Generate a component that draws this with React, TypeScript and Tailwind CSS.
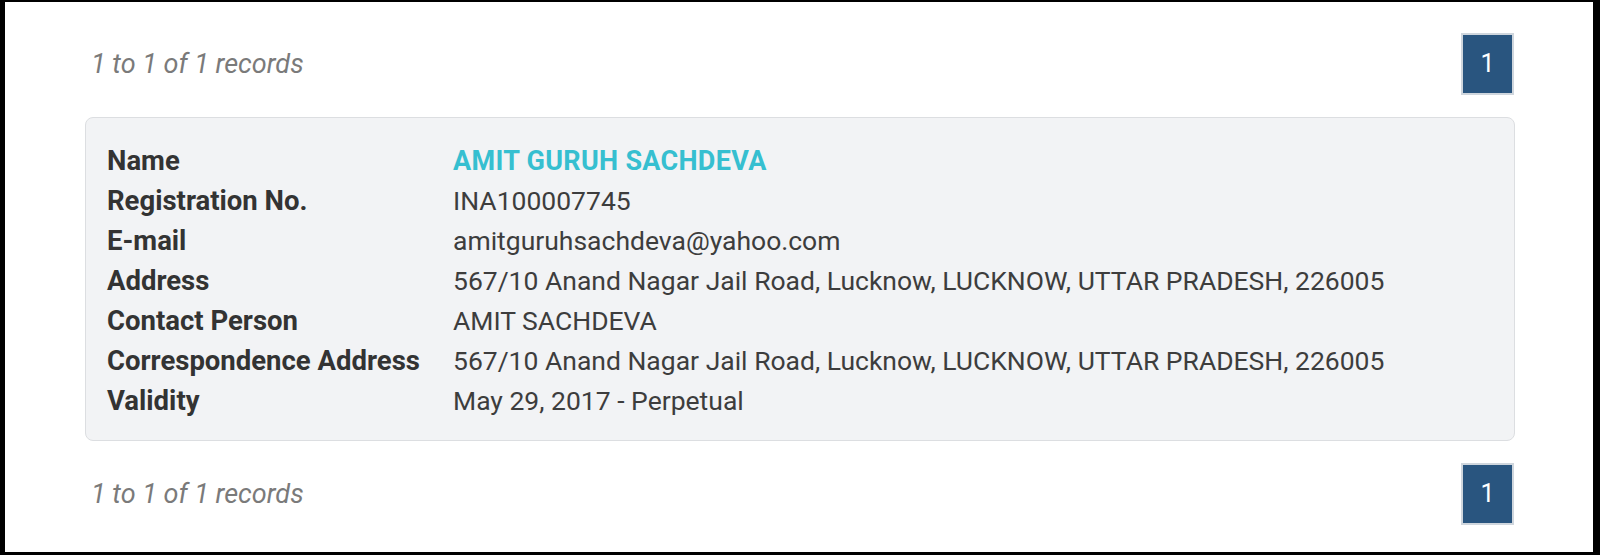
import React from "react";

const rows: { label: string; value: string; accent?: boolean }[] = [
  { label: "Name", value: "AMIT GURUH SACHDEVA", accent: true },
  { label: "Registration No.", value: "INA100007745" },
  { label: "E-mail", value: "amitguruhsachdeva@yahoo.com" },
  { label: "Address", value: "567/10 Anand Nagar Jail Road, Lucknow, LUCKNOW, UTTAR PRADESH, 226005" },
  { label: "Contact Person", value: "AMIT SACHDEVA" },
  { label: "Correspondence Address", value: "567/10 Anand Nagar Jail Road, Lucknow, LUCKNOW, UTTAR PRADESH, 226005" },
  { label: "Validity", value: "May 29, 2017 - Perpetual" },
];

function Pager() {
  return (
    <div className="flex items-center justify-between">
      <span className="pl-[6px] text-[27px] italic text-[#7a7a7a]">1 to 1 of 1 records</span>
      <div className="mr-[1px] flex h-[62px] w-[53px] items-center justify-center border-2 border-[#cfd6dd] bg-[#29557f] text-[25px] text-white">
        1
      </div>
    </div>
  );
}

export default function App() {
  return (
    <div
      className="h-[555px] w-[1600px] bg-black pt-[2px] pl-[5px] pr-[7px] pb-[3px]"
      style={{ fontFamily: "Roboto, 'Open Sans', sans-serif" }}
    >
      <div className="flex h-full flex-col gap-[22px] bg-white pl-[80px] pr-[78px] pt-[31px]">
        <Pager />
        <div className="rounded-[8px] border border-[#dcdee1] bg-[#f2f3f5] pl-[21px] pr-[21px] pt-[23px] pb-[19px]">
          <div className="grid grid-cols-[346px_1fr] text-[26.5px] leading-[40px]">
            {rows.map((r) => (
              <React.Fragment key={r.label}>
                <div className="text-[27.5px] font-bold text-[#333]">{r.label}</div>
                <div className={r.accent ? "text-[27px] font-bold tracking-[0.3px] text-[#36bfd0]" : "text-[#3d3d3d]"}>{r.value}</div>
              </React.Fragment>
            ))}
          </div>
        </div>
        <Pager />
      </div>
    </div>
  );
}
